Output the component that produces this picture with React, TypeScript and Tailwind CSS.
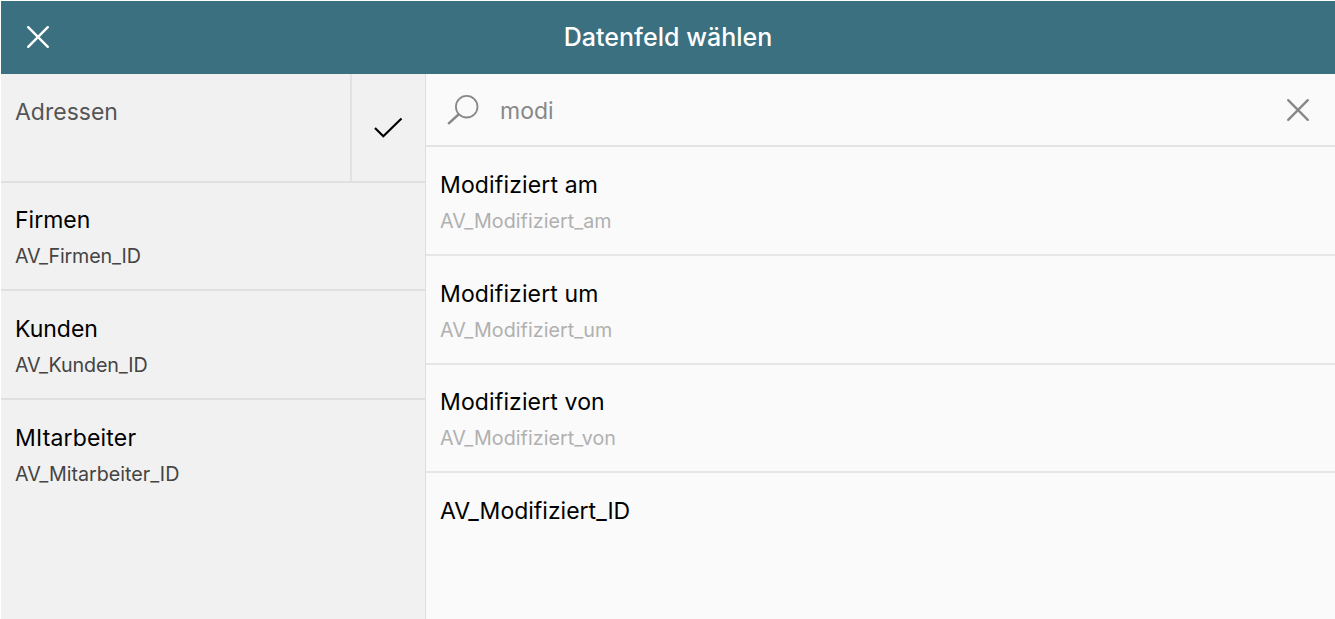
const tables = [
  { name: "Firmen", field: "AV_Firmen_ID", box: "h-[108px] pt-[21px] border-b-2", nameText: "", fieldText: "tracking-[-0.15px]" },
  { name: "Kunden", field: "AV_Kunden_ID", box: "h-[109px] pt-[22px] border-b-2", nameText: "", fieldText: "tracking-[-0.12px]" },
  { name: "MItarbeiter", field: "AV_Mitarbeiter_ID", box: "h-[109px] pt-[22px]", nameText: "tracking-[0.18px]", fieldText: "" },
];
const fields = [
  { name: "Modifiziert am", field: "AV_Modifiziert_am", box: "h-[109px] pt-[22px] border-b-2", nameText: "tracking-[0.15px]" },
  { name: "Modifiziert um", field: "AV_Modifiziert_um", box: "h-[109px] pt-[22px] border-b-2", nameText: "tracking-[0.13px]" },
  { name: "Modifiziert von", field: "AV_Modifiziert_von", box: "h-[108px] pt-[21px] border-b-2", nameText: "tracking-[0.13px]" },
  { name: "AV_Modifiziert_ID", field: "", box: "h-[109px] pt-[22px]", nameText: "" },
];

function Cross({ className }: { className: string }) {
  return (
    <svg className={className} viewBox="0 0 24 24" fill="none" stroke="currentColor" strokeWidth="2.4" strokeLinecap="round">
      <path d="M2.2 2.2 21.8 21.8M21.8 2.2 2.2 21.8" />
    </svg>
  );
}

export default function App() {
  return (
    <div className="flex h-[619px] w-full flex-col overflow-hidden bg-white pl-px pt-px font-['Inter',sans-serif] text-[23px] text-black">
      <header className="grid h-[73px] shrink-0 grid-cols-[74px_1fr_74px] items-center bg-[#3a7080] text-white">
        <button className="mb-0.5 ml-[25px]"><Cross className="size-6" /></button>
        <h1 className="text-center text-[25px] font-[450] tracking-[0.04px]">Datenfeld wählen</h1>
      </header>
      <main className="flex min-h-0 grow">
        <aside className="w-[425px] shrink-0 border-r border-[#dedede] bg-[#f1f1f1]">
          <div className="flex h-[109px] border-b-2 border-[#e0e0e0] text-[#555]">
            <div className="grow pl-3.5 pt-[22px] leading-8">Adressen</div>
            <div className="flex w-[75px] items-center justify-center border-l-2 border-[#e2e2e2] text-black">
              <svg className="mr-0.5 size-8" viewBox="0 0 32 32" fill="none" stroke="currentColor" strokeWidth="2.2"><path d="M3 16 11.3 24.2 29.5 6.5" /></svg>
            </div>
          </div>
          {tables.map((t) => (
            <div key={t.name} className={`border-[#e0e0e0] pl-3.5 ${t.box}`}>
              <div className={`leading-8 ${t.nameText}`}>{t.name}</div>
              <div className={`mt-1 text-[19.7px] font-[370] leading-8 text-[#444] ${t.fieldText}`}>{t.field}</div>
            </div>
          ))}
        </aside>
        <section className="grow bg-[#fafafa]">
          <div className="flex h-[73px] items-center border-b-2 border-[#e4e4e4] pl-[21px] pr-[25px] text-[#888]">
            <svg className="mt-px size-8" viewBox="0 0 32 32" fill="none" stroke="currentColor" strokeWidth="1.8"><circle cx="19.7" cy="12.7" r="10.8" /><path d="M11.5 20.5 1.8 29.3" strokeWidth="2.4" strokeLinecap="round" /></svg>
            <span className="ml-[21px] mt-1 grow">modi</span>
            <Cross className="size-6" />
          </div>
          {fields.map((f) => (
            <div key={f.name} className={`border-[#e6e6e6] pl-3.5 ${f.box}`}>
              <div className={`leading-8 ${f.nameText}`}>{f.name}</div>
              <div className="mt-1 text-[19.7px] font-[370] leading-8 tracking-[0.04px] text-[#b0b0b0]">{f.field}</div>
            </div>
          ))}
        </section>
      </main>
    </div>
  );
}
